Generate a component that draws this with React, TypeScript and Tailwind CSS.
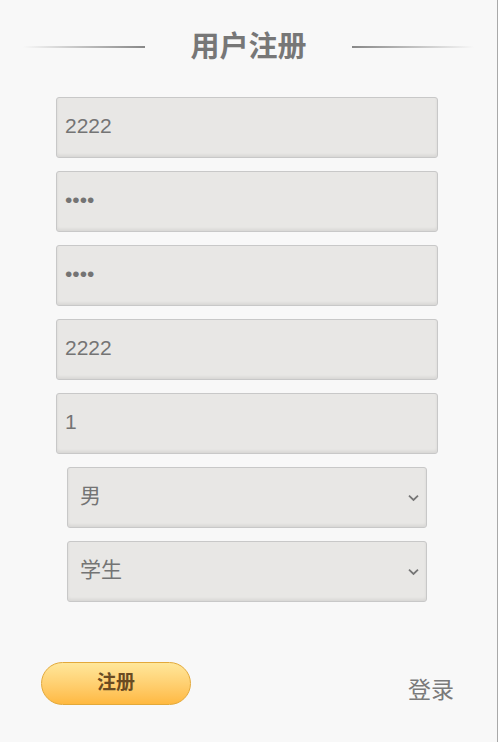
import React from 'react'

const font = "font-['Liberation_Sans','Noto_Sans_CJK_SC',sans-serif]"

const field =
  'block h-[61px] rounded-[3px] border border-[#c8c8c8] bg-[#e8e7e5] px-[8px] pb-[4px] text-[21px] text-[#747474] outline-none shadow-[inset_0_-2px_3px_rgba(0,0,0,0.07)]'

const Chevron = () => (
  <svg
    className="pointer-events-none absolute right-[8px] top-1/2 -translate-y-1/2"
    width="11"
    height="7"
    viewBox="0 0 11 7"
  >
    <path d="M1 1.2 L5.5 5.5 L10 1.2" fill="none" stroke="#777" strokeWidth="1.8" />
  </svg>
)

const Select = ({ options }: { options: string[] }) => (
  <div className="relative ml-[67px] w-[360px]">
    <select className={`${field} w-full appearance-none pl-[12px]`} defaultValue={options[0]}>
      {options.map((o) => (
        <option key={o}>{o}</option>
      ))}
    </select>
    <Chevron />
  </div>
)

const App = () => {
  return (
    <section className={`${font} h-[742px] w-[498px] border-r border-[#a9a9a9] bg-[#f8f8f8] pt-[27px]`}>
      <div className="flex h-[40px] items-center justify-center">
        <div className="h-[2px] w-[122px] bg-gradient-to-r from-transparent to-[#888]" />
        <h1 className="mx-[45px] text-[29px] font-bold leading-none text-[#777]">用户注册</h1>
        <div className="h-[2px] w-[122px] bg-gradient-to-l from-transparent to-[#888]" />
      </div>

      <div className="mt-[30px] flex flex-col gap-[13px]">
        <input className={`${field} ml-[56px] w-[382px]`} defaultValue="2222" />
        <input type="password" className={`${field} ml-[56px] w-[382px]`} defaultValue="2222" />
        <input type="password" className={`${field} ml-[56px] w-[382px]`} defaultValue="2222" />
        <input className={`${field} ml-[56px] w-[382px]`} defaultValue="2222" />
        <input className={`${field} ml-[56px] w-[382px]`} defaultValue="1" />
        <Select options={['男', '女']} />
        <Select options={['学生', '教师']} />
      </div>

      <div className="mt-[60px] flex items-start">
        <button className="ml-[41px] h-[43px] w-[150px] rounded-full border border-[#e3a93a] bg-gradient-to-b from-[#ffe79a] to-[#ffb940] text-[19px] font-bold text-[#6a4b22]">
          注册
        </button>
        <span className="ml-auto mr-[43px] mt-[14px] text-[23px] leading-[28px] text-[#7a7a7a]">登录</span>
      </div>
    </section>
  )
}

export default App
